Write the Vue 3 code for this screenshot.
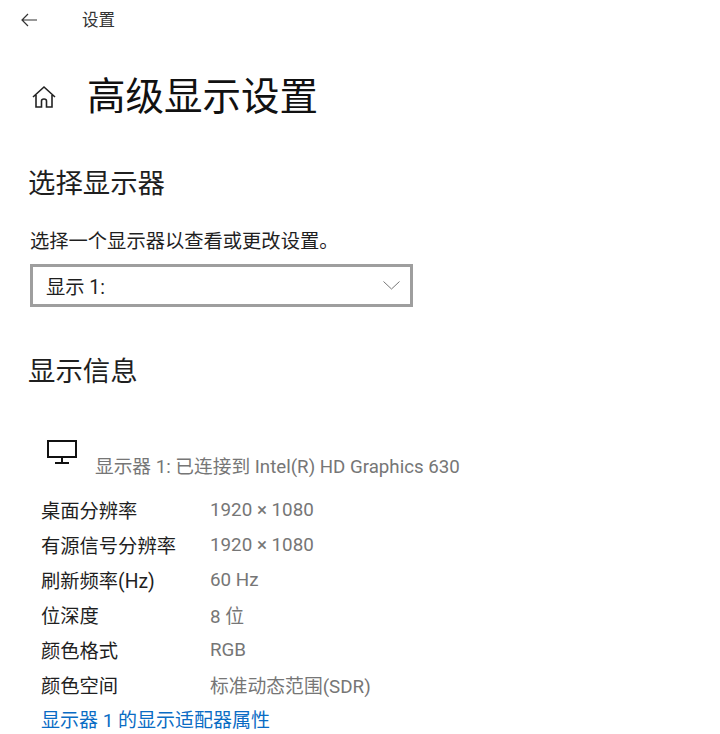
<template>
  <div class="page">
    <div class="topbar">
      <svg class="back" width="18" height="14" viewBox="0 0 18 14">
        <path d="M8 1 L2 7 L8 13 M2 7 H17" fill="none" stroke="#333" stroke-width="1.2" />
      </svg>
      <span class="top-title">设置</span>
    </div>

    <div class="title-row">
      <svg class="home" width="26" height="26" viewBox="0 0 26 26">
        <path d="M2 13 L13 3 L24 13 M5 11 V23 H10.5 V17 Q10.5 15 13 15 Q15.5 15 15.5 17 V23 H21 V11" fill="none" stroke="#222" stroke-width="1.6" />
      </svg>
      <h1>高级显示设置</h1>
    </div>

    <h2 class="first">选择显示器</h2>
    <p class="hint">选择一个显示器以查看或更改设置。</p>
    <div class="select">
      <span>显示 1:</span>
      <svg width="17" height="9" viewBox="0 0 17 9">
        <path d="M0.5 0.5 L8.5 8 L16.5 0.5" fill="none" stroke="#777" stroke-width="1" />
      </svg>
    </div>

    <h2 class="second">显示信息</h2>

    <div class="monitor-row">
      <svg class="monitor" width="32" height="26" viewBox="0 0 32 26">
        <path d="M2 2 H30 V18 H2 Z" fill="none" stroke="#111" stroke-width="2" />
        <path d="M16 18 V23 M9 24 H23" fill="none" stroke="#111" stroke-width="2" />
      </svg>
      <span class="monitor-text">显示器 1: 已连接到 Intel(R) HD Graphics 630</span>
    </div>

    <div class="info">
      <div class="row" v-for="row in rows" :key="row.label">
        <span class="label">{{ row.label }}</span>
        <span class="value">{{ row.value }}</span>
      </div>
    </div>
    <a class="link">显示器 1 的显示适配器属性</a>
  </div>
</template>

<script setup>
const rows = [
  { label: '桌面分辨率', value: '1920 × 1080' },
  { label: '有源信号分辨率', value: '1920 × 1080' },
  { label: '刷新频率(Hz)', value: '60 Hz' },
  { label: '位深度', value: '8 位' },
  { label: '颜色格式', value: 'RGB' },
  { label: '颜色空间', value: '标准动态范围(SDR)' }
]
</script>

<style>
html, body {
  margin: 0;
  background: #fff;
}
</style>

<style scoped>
.page {
  width: 720px;
  height: 734px;
  overflow: hidden;
  box-sizing: border-box;
  font-family: Roboto, "Noto Sans CJK SC", sans-serif;
  color: #1f1f1f;
}
.topbar {
  display: flex;
  align-items: center;
  height: 40px;
  padding-left: 20px;
}
.back {
  margin-right: 44px;
}
.top-title {
  font-size: 16.5px;
  color: #333;
  margin-top: -2px;
}
.title-row {
  display: flex;
  align-items: center;
  margin-top: 32px;
  padding-left: 31px;
  height: 50px;
}
.home {
  margin-right: 30px;
}
h1 {
  margin: 0;
  font-size: 38.5px;
  font-weight: 400;
  line-height: 50px;
  color: #111;
}
h2 {
  margin: 0;
  font-size: 27.4px;
  font-weight: 400;
  line-height: 36px;
  padding-left: 28px;
}
.first {
  margin-top: 44px;
}
.hint {
  margin: 28px 0 0;
  padding-left: 30px;
  font-size: 19.3px;
  line-height: 24px;
}
.select {
  display: flex;
  align-items: center;
  justify-content: space-between;
  box-sizing: border-box;
  width: 383px;
  height: 43px;
  margin: 10px 0 0 30px;
  padding: 0 10px 0 13px;
  border: 3px solid #9e9e9e;
  font-size: 19.3px;
}
.second {
  margin-top: 47px;
}
.monitor-row {
  position: relative;
  height: 40px;
  margin-top: 49px;
  padding-left: 46px;
}
.monitor {
  display: block;
}
.monitor-text {
  position: absolute;
  left: 95px;
  top: 16px;
  font-size: 18.7px;
  line-height: 24px;
  color: #767676;
  white-space: nowrap;
}
.info {
  padding-left: 41px;
  margin-top: 13px;
}
.row {
  display: flex;
  height: 35px;
  align-items: center;
  font-size: 19.3px;
}
.label {
  width: 169px;
}
.value {
  color: #767676;
  font-size: 18.8px;
}
.link {
  display: block;
  padding-left: 41px;
  margin-top: 1px;
  font-size: 19px;
  line-height: 35px;
  color: #0a6cc4;
}
</style>
